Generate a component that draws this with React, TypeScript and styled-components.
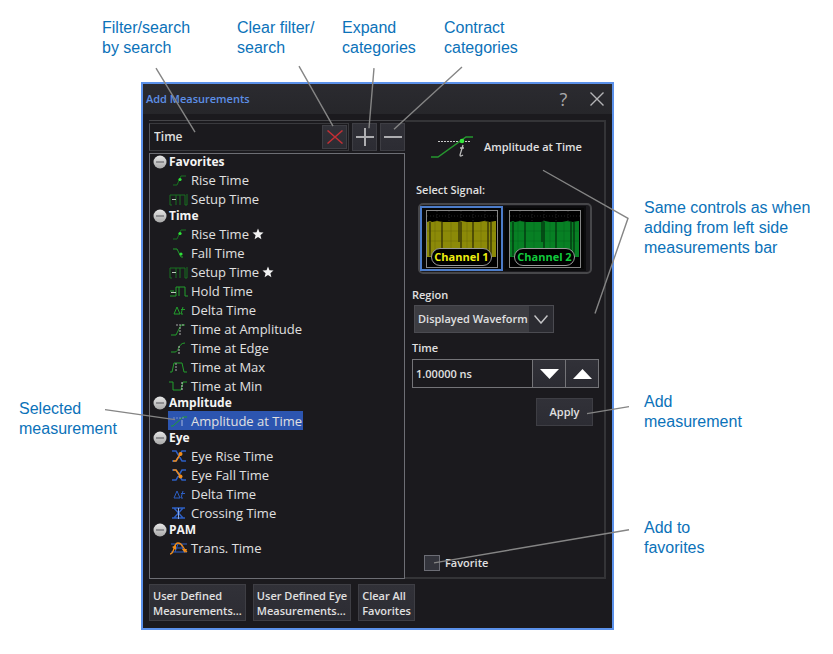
import React, { useState } from 'react';
import styled, { createGlobalStyle, css } from 'styled-components';

const GlobalStyle = createGlobalStyle`
  *, *::before, *::after { box-sizing: border-box; }
  body { margin: 0; background: #fff; }
  button, input, select { font: inherit; color: inherit; margin: 0; }
`;

const uiFont = `'Open Sans', 'Noto Sans', sans-serif`;

const Figure = styled.main`
  position: relative;
  display: grid;
  grid-template-columns: 141px minmax(0, 1fr) 219px;
  padding-bottom: 25px;
`;

const TopCallouts = styled.div`
  grid-column: 1 / -1;
  display: grid;
  grid-template-columns: 135px 105px 102px 1fr;
  height: 82px;
  padding: 18px 0 0 102px;
`;

const Callout = styled.p`
  margin: 0;
  font: 16px/20px 'Liberation Sans', Arial, sans-serif;
  color: #0b72b9;
`;

const LeftCallouts = styled.aside`
  padding: 317px 0 0 19px;
`;

const RightCallouts = styled.aside`
  padding: 116px 0 0 30px;
  ${Callout}:nth-child(2) { margin-top: 134px; }
  ${Callout}:nth-child(3) { margin-top: 86px; }
`;

const Leaders = styled.svg`
  position: absolute;
  inset: 0;
  width: 100%;
  height: 100%;
  pointer-events: none;
  fill: none;
  stroke: #858585;
  stroke-width: 1.4;
`;

const Dialog = styled.section`
  display: flex;
  flex-direction: column;
  border: 2px solid #5b91ea;
  background: #1b1a1e;
  color: #e0e0e0;
  font: 600 11px/16px ${uiFont};
`;

const TitleBar = styled.header`
  display: flex;
  align-items: center;
  height: 30px;
  padding: 0 6px 0 3px;
  background: linear-gradient(#2b2b30, #26262a);
`;

const Title = styled.h1`
  flex: 1;
  margin: 0;
  font-size: 11px;
  font-weight: 600;
  color: #5d8fe6;
`;

const TitleButton = styled.button`
  display: grid;
  place-items: center;
  width: 33px;
  height: 24px;
  padding: 0;
  border: 0;
  background: none;
  color: #a9a9ab;
  font-size: 18px;
  font-weight: 400;
  &:last-child { width: 18px; margin-left: 8px; }
`;

const Body = styled.div`
  display: grid;
  grid-template-columns: minmax(0, 1fr) 201px;
  height: 459px;
  margin: 6px 6px 0;
`;

const Browser = styled.div`
  display: flex;
  flex-direction: column;
  gap: 2px;
  border-top: 1px solid #444448;
`;

const SearchRow = styled.div`
  display: flex;
  gap: 3px;
  padding-top: 2px;
  height: 30px;
`;

const SearchBox = styled.div`
  flex: 1;
  display: flex;
  min-width: 0;
  padding: 1px;
  border: 1px solid #39393d;
  border-left-color: #55565b;
`;

const SearchInput = styled.input`
  flex: 1;
  min-width: 0;
  padding: 0 3px;
  border: 0;
  background: none;
  font-size: 12px;
  outline: none;
`;

const panelButton = css`
  border: 1px solid #3e3e44;
  background: linear-gradient(#313138, #2c2c33);
`;

const SquareButton = styled.button`
  ${panelButton}
  display: grid;
  place-items: center;
  width: 25px;
  padding: 0;
`;

const Tree = styled.ul`
  flex: 1;
  margin: 0;
  padding: 0 3px;
  border: 1px solid #6d6e74;
  list-style: none;
`;

const Branch = styled.ul`
  margin: 0;
  padding: 0 0 0 15px;
  list-style: none;
`;

const CategoryButton = styled.button`
  display: flex;
  align-items: center;
  gap: 2px;
  height: 16px;
  padding: 0;
  border: 0;
  background: none;
  font-size: 12px;
  font-weight: 700;
  color: #f4f4f4;
`;

const ItemButton = styled.button<{ $selected: boolean }>`
  display: flex;
  align-items: center;
  gap: 3px;
  height: 19px;
  padding: 0 1px;
  border: 0;
  background: ${p => (p.$selected ? '#2c55b0' : 'none')};
  font-size: 13px;
  font-weight: 500;
  line-height: 18px;
  white-space: nowrap;
`;

const Details = styled.div`
  display: flex;
  flex-direction: column;
  align-items: flex-start;
  padding: 11px 4px 6px 6px;
  border: 2px solid #343437;
  border-left: 0;
`;

const MeasureHead = styled.div`
  display: flex;
  align-items: center;
  gap: 10px;
  padding-left: 20px;
  height: 28px;
`;

const Label = styled.label<{ $top: number }>`
  margin-top: ${p => p.$top}px;
  padding-left: 1px;
`;

const Signals = styled.fieldset`
  display: flex;
  min-width: 0;
  margin: 0 0 0 7px;
  padding: 1px 4px 1px 0;
  border: 2px solid #47474a;
  border-radius: 5px;
`;

const GroupLegend = styled.div`
  margin: 21px 0 5px 5px;
`;

const SignalOption = styled.button<{ $active: boolean }>`
  display: grid;
  place-items: center;
  width: 83px;
  height: 65px;
  padding: 0;
  border: 2px solid ${p => (p.$active ? '#4d7dca' : '#0c0c0e')};
  background: #060606;
`;

const Thumb = styled.span`
  display: grid;
  width: 72px;
  height: 58px;
  border: 1px solid #858585;
  background: #000;
  svg { grid-area: 1 / 1; }
`;

const ChannelName = styled.span<{ $color: string }>`
  grid-area: 1 / 1;
  place-self: end center;
  width: 61px;
  height: 18px;
  margin-bottom: 1px;
  border: 1px solid #999;
  border-radius: 9px;
  background: #000;
  color: ${p => p.$color};
  font-size: 11px;
  line-height: 16px;
  font-weight: 700;
`;

const SelectWrap = styled.div`
  display: grid;
  grid-template-columns: 1fr 25px;
  width: 140px;
  height: 28px;
  margin: 2px 0 0 3px;
  border: 1px solid #4b4b51;
  background: linear-gradient(90deg, #3d3d42 114px, #2b2b31 114px);
  svg { grid-area: 1 / 2; place-self: center; pointer-events: none; }
`;

const Select = styled.select`
  grid-area: 1 / 1 / 2 / 3;
  appearance: none;
  padding: 0 0 0 3px;
  border: 0;
  background: none;
  option { color: #111; }
`;

const Spinner = styled.div`
  display: flex;
  width: 187px;
  height: 29px;
  margin: 3px 0 0 1px;
  border: 1px solid #747478;
`;

const SpinInput = styled.input`
  flex: 1;
  min-width: 0;
  padding: 0 3px;
  border: 0;
  background: none;
  outline: none;
`;

const SpinButton = styled.button`
  display: grid;
  place-items: center;
  width: 33px;
  padding: 0;
  border: 0;
  border-left: 1px solid #747478;
  background: linear-gradient(#313138, #2b2b32);
`;

const ApplyButton = styled.button`
  ${panelButton}
  align-self: flex-end;
  width: 57px;
  height: 28px;
  margin: 10px 7px 0 0;
  padding: 0;
`;

const FavoriteLabel = styled.label`
  display: flex;
  align-items: center;
  gap: 5px;
  margin: auto 0 0 13px;
  input {
    appearance: none;
    width: 16px;
    height: 16px;
    border: 1px solid #6c6d75;
    background: #33343c;
  }
  input:checked { background: #5b91ea; }
`;

const Footer = styled.footer`
  display: flex;
  gap: 7px;
  padding: 5px 6px 7px;
`;

const FooterButton = styled.button`
  ${panelButton}
  height: 37px;
  padding: 0 3px;
  text-align: left;
  line-height: 15px;
  white-space: pre-line;
`;

const G = '#22a02c';
const B = '#2d5fc4';
const O = '#f08c1a';

const glyphs: Record<string, React.ReactNode> = {
  rise: <><path d="M4 14h4l4-9h5" stroke="#187020" /><circle cx="11" cy="8.500" r="1.600" fill="#2fe23a" stroke="none" /></>,
  fall: <><path d="M4 5h4l4 8h2" stroke={G} /><circle cx="12" cy="10" r="1.600" fill="#2fe23a" stroke="none" /></>,
  setup: <><path d="M1 15V5h6v10M11 15V5h5v10h2V4M1 15h2M7 5h4" stroke="#187020" /><path d="M3 9.500h4" stroke="#b8c8b8" /></>,
  hold: <><path d="M1 14h6M7 14V5M10 14V5h6v9h3M1 9h4M7 5h3" stroke={G} /><path d="M2 10.500h5" stroke="#b8c8b8" /></>,
  delta: <><path d="M5 13l3-7 3 7zM14 6l-2 7h2M12 8.500h4" stroke={G} /></>,
  deltaEye: <><path d="M5 13l3-7 3 7zM14 6l-2 7h2M12 8.500h4" stroke={B} /></>,
  atAmp: <><path d="M2 15h5l5-10h4" stroke={G} /><path d="M7 5h8M11 7v8" stroke="#aaa" strokeDasharray="2 1" /></>,
  atEdge: <><path d="M2 13h4c4 0 3-9 10-9" stroke={G} /><path d="M10 7v8" stroke="#bbb" strokeDasharray="2 1" /></>,
  atMax: <><path d="M1 14h2l2-9h8l2 9h3" stroke={G} /><path d="M7 5v9" stroke="#aaa" strokeDasharray="2 1" /></>,
  atMin: <><path d="M0 5h4v8h8l2-8h4" stroke={G} /><path d="M13 5v9" stroke="#ccc" strokeDasharray="2 1" /></>,
  ampAt: <><path d="M2 14h2l10-9h4" stroke={G} /><path d="M4 6h11" stroke="#7891c8" strokeDasharray="2 1" /><path d="M13 8v6" stroke="#a7b7dc" /></>,
  eyeRise: <><path d="M3 4h4l6 10h4M3 14h4l6-10h4" stroke={B} strokeWidth="1.500" /><path d="M4 14h3l5-8" stroke={O} strokeWidth="1.500" /><circle cx="11.500" cy="7" r="2" fill={O} stroke="none" /></>,
  eyeFall: <><path d="M3 4h4l6 10h4M3 14h4l6-10h4" stroke={B} strokeWidth="1.500" /><path d="M4 4h3l5 7" stroke={O} strokeWidth="1.500" /><circle cx="11.500" cy="10.500" r="2" fill={O} stroke="none" /></>,
  crossing: <><path d="M3 4h13M3 14h13M5 4l9 10M14 4L5 14" stroke={B} strokeWidth="1.500" /><path d="M9.500 4v11" stroke="#8ea9dd" /></>,
  pam: <><path d="M2 5h16M2 13h16M5 9h9M6 13l3-8M12 5l3 8" stroke={B} /><path d="M1 15c5 0 3-11 8-11s4 5 9 9" stroke={O} strokeWidth="1.300" /><path d="M3 8l4-2v5zM13 10h5l-2 4z" fill={O} stroke="none" /></>,
};

const Glyph = ({ name }: { name: string }) => (
  <svg width="19" height="18" viewBox="0 0 19 18" fill="none" strokeWidth="1" aria-hidden="true">
    {glyphs[name]}
  </svg>
);

const Star = () => (
  <svg width="12" height="12" viewBox="0 0 12 12" fill="#f2f2f2" aria-label="favorite">
    <path d="M6 .5l1.500 3.800 4 .3-3.100 2.600 1 4L6 9l-3.400 2.200 1-4L.5 4.600l4-.3z" />
  </svg>
);

const Toggle = ({ open }: { open: boolean }) => (
  <svg width="14" height="14" viewBox="0 0 14 14" aria-hidden="true">
    <defs>
      <linearGradient id="knob" x2="0" y2="1">
        <stop stopColor="#e6e6e6" />
        <stop offset="1" stopColor="#a8a8a8" />
      </linearGradient>
    </defs>
    <circle cx="7" cy="7" r="6.500" fill="url(#knob)" />
    <path d={open ? 'M3 7h8' : 'M3 7h8M7 3v8'} stroke="#55555a" />
  </svg>
);

const Trace = ({ color, line }: { color: string; line: string }) => (
  <svg width="70" height="56" viewBox="0 0 70 56" aria-hidden="true">
    <path d="M0 5h70M10 0v10M22 0v10M34 0v10M46 0v10M58 0v10" stroke="#242424" strokeDasharray="1 2" />
    <path d="M0 11l3-1 2 1 5-1 6 1h15l4-1 5 1h12l5-1 6 1 5-1h1v36H0z" fill={color} />
    <path d="M3 11v34M15 11v34M32 11v20M34 11v34M46 11v34M61 11v34M64 11v34" stroke={line} strokeWidth="1.500" />
    <path d="M0 20h70M0 30h70M8 11v34M24 11v34M40 11v34M54 11v34" stroke={line} strokeOpacity=".2" />
  </svg>
);

type Item = [glyph: string, name: string, starred?: boolean];
const categories: { name: string; items: Item[] }[] = [
  { name: 'Favorites', items: [['rise', 'Rise Time'], ['setup', 'Setup Time']] },
  {
    name: 'Time',
    items: [
      ['rise', 'Rise Time', true], ['fall', 'Fall Time'], ['setup', 'Setup Time', true],
      ['hold', 'Hold Time'], ['delta', 'Delta Time'], ['atAmp', 'Time at Amplitude'],
      ['atEdge', 'Time at Edge'], ['atMax', 'Time at Max'], ['atMin', 'Time at Min'],
    ],
  },
  { name: 'Amplitude', items: [['ampAt', 'Amplitude at Time']] },
  {
    name: 'Eye',
    items: [['eyeRise', 'Eye Rise Time'], ['eyeFall', 'Eye Fall Time'], ['deltaEye', 'Delta Time'], ['crossing', 'Crossing Time']],
  },
  { name: 'PAM', items: [['pam', 'Trans. Time']] },
];

const allOpen = categories.map(c => c.name);

export default function App() {
  const [query, setQuery] = useState('Time');
  const [open, setOpen] = useState<string[]>(allOpen);
  const [selected, setSelected] = useState('Amplitude/Amplitude at Time');
  const [channel, setChannel] = useState(1);
  const [time, setTime] = useState('1.00000 ns');

  const step = (by: number) => setTime(`${((parseFloat(time) || 0) + by).toFixed(5)} ns`);
  const toggle = (name: string) =>
    setOpen(open.includes(name) ? open.filter(n => n !== name) : [...open, name]);

  return (
    <Figure>
      <GlobalStyle />
      <TopCallouts>
        <Callout>Filter/search<br />by search</Callout>
        <Callout>Clear filter/<br />search</Callout>
        <Callout>Expand<br />categories</Callout>
        <Callout>Contract<br />categories</Callout>
      </TopCallouts>

      <LeftCallouts>
        <Callout>Selected<br />measurement</Callout>
      </LeftCallouts>

      <Dialog aria-label="Add Measurements">
        <TitleBar>
          <Title>Add Measurements</Title>
          <TitleButton aria-label="Help">?</TitleButton>
          <TitleButton aria-label="Close">
            <svg width="14" height="14" viewBox="0 0 14 14" stroke="#b4b4b6" strokeWidth="1.400">
              <path d="M.5 .5l13 13M13.500 .5L.5 13.500" />
            </svg>
          </TitleButton>
        </TitleBar>

        <Body>
          <Browser>
            <SearchRow>
              <SearchBox>
                <SearchInput aria-label="Filter" value={query} onChange={e => setQuery(e.target.value)} />
                <SquareButton aria-label="Clear filter" onClick={() => setQuery('')}>
                  <svg width="16" height="14" viewBox="0 0 16 14" stroke="#c22f35" strokeWidth="1.500">
                    <path d="M.5 .5l15 13M15.500 .5L.5 13.500" />
                  </svg>
                </SquareButton>
              </SearchBox>
              <SquareButton aria-label="Expand categories" onClick={() => setOpen(allOpen)}>
                <svg width="18" height="18" viewBox="0 0 18 18" stroke="#adadb0" strokeWidth="2">
                  <path d="M0 9h18M9 0v18" />
                </svg>
              </SquareButton>
              <SquareButton aria-label="Contract categories" onClick={() => setOpen([])}>
                <svg width="18" height="18" viewBox="0 0 18 18" stroke="#adadb0" strokeWidth="2">
                  <path d="M0 9h18" />
                </svg>
              </SquareButton>
            </SearchRow>
            <Tree>
              {categories.map(c => (
                <li key={c.name}>
                  <CategoryButton aria-expanded={open.includes(c.name)} onClick={() => toggle(c.name)}>
                    <Toggle open={open.includes(c.name)} />
                    {c.name}
                  </CategoryButton>
                  {open.includes(c.name) && (
                    <Branch>
                      {c.items.map(([glyph, name, starred]) => {
                        const id = `${c.name}/${name}`;
                        return (
                          <li key={id}>
                            <ItemButton $selected={selected === id} onClick={() => setSelected(id)}>
                              <Glyph name={glyph} />
                              {name}
                              {starred && <Star />}
                            </ItemButton>
                          </li>
                        );
                      })}
                    </Branch>
                  )}
                </li>
              ))}
            </Tree>
          </Browser>

          <Details>
            <MeasureHead>
              <svg width="43" height="24" viewBox="0 0 43 24" fill="none" aria-hidden="true">
                <path d="M7 6.500h32" stroke="#c9c9c9" strokeDasharray="2 1" />
                <path d="M0 22h7L35 2h7" stroke="#26962f" strokeWidth="1.500" />
                <circle cx="31" cy="6" r="2.300" fill="#35e93c" />
                <path d="M32 10l-3 10q0 2 3 0M29 13h4" stroke="#bbb" strokeWidth="1.300" />
              </svg>
              Amplitude at Time
            </MeasureHead>

            <GroupLegend id="signal">Select Signal:</GroupLegend>
            <Signals aria-labelledby="signal">
              <SignalOption $active={channel === 1} onClick={() => setChannel(1)}>
                <Thumb>
                  <Trace color="#8c8a08" line="#3c3b05" />
                  <ChannelName $color="#eeee10">Channel 1</ChannelName>
                </Thumb>
              </SignalOption>
              <SignalOption $active={channel === 2} onClick={() => setChannel(2)}>
                <Thumb>
                  <Trace color="#078024" line="#043c12" />
                  <ChannelName $color="#12c93c">Channel 2</ChannelName>
                </Thumb>
              </SignalOption>
            </Signals>

            <Label $top={13} htmlFor="region">Region</Label>
            <SelectWrap>
              <Select id="region">
                <option>Displayed Waveform</option>
              </Select>
              <svg width="14" height="9" viewBox="0 0 14 9" fill="none" stroke="#c4c4c6" strokeWidth="1.500">
                <path d="M.5 .5L7 8 13.500 .5" />
              </svg>
            </SelectWrap>

            <Label $top={7} htmlFor="time">Time</Label>
            <Spinner>
              <SpinInput id="time" value={time} onChange={e => setTime(e.target.value)} />
              <SpinButton aria-label="Decrease time" onClick={() => step(-1)}>
                <svg width="19" height="10" viewBox="0 0 19 10" fill="#fff"><path d="M0 0h19L9.500 10z" /></svg>
              </SpinButton>
              <SpinButton aria-label="Increase time" onClick={() => step(1)}>
                <svg width="19" height="10" viewBox="0 0 19 10" fill="#fff"><path d="M0 10h19L9.500 0z" /></svg>
              </SpinButton>
            </Spinner>
            <ApplyButton>Apply</ApplyButton>

            <FavoriteLabel>
              <input type="checkbox" />
              Favorite
            </FavoriteLabel>
          </Details>
        </Body>

        <Footer>
          <FooterButton>{'User Defined\nMeasurements...'}</FooterButton>
          <FooterButton>{'User Defined Eye\nMeasurements...'}</FooterButton>
          <FooterButton>{'Clear All\nFavorites'}</FooterButton>
        </Footer>
      </Dialog>

      <RightCallouts>
        <Callout>Same controls as when<br />adding from left side<br />measurements bar</Callout>
        <Callout>Add<br />measurement</Callout>
        <Callout>Add to<br />favorites</Callout>
      </RightCallouts>

      <Leaders viewBox="0 0 833 654" preserveAspectRatio="none" aria-hidden="true">
        <path d="M156 68L195 132M299 66L333 126M374 68L369 128M462 67L394 129" />
        <path d="M105 409L175 419M543 170L628 218L595 313M629 406L587 413M629 529L434 562" />
      </Leaders>
    </Figure>
  );
}
